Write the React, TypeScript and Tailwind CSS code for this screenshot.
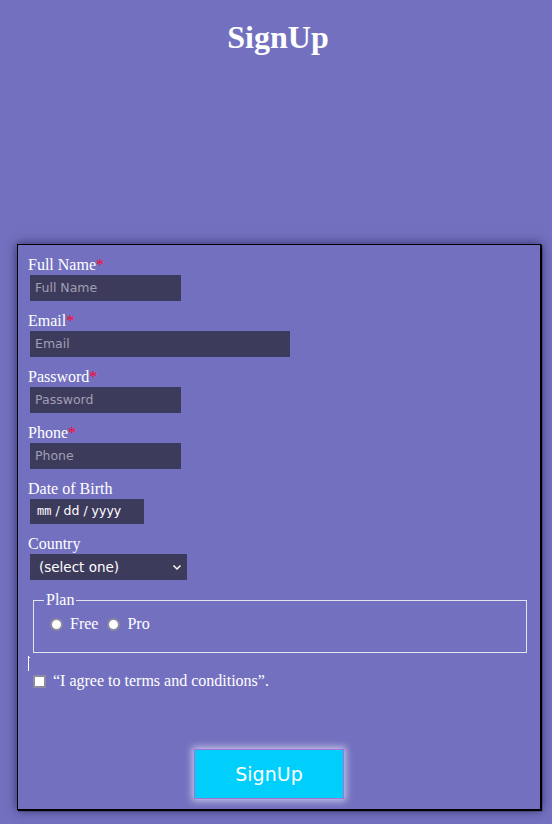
import React from "react";

const serif = "font-['Liberation_Serif','Times_New_Roman',serif]";
const sans = "font-['DejaVu_Sans','Verdana',sans-serif]";

function Field({ label, req, width, placeholder }: { label: string; req?: boolean; width: string; placeholder: string }) {
  return (
    <div className="flex flex-col items-start">
      <div className="h-[19px] leading-[19px] text-[16px] text-white">
        {label}
        {req && <span className="text-[#ff0033]">*</span>}
      </div>
      <div className={`mt-[1px] ml-[2px] h-[26px] ${width} bg-[#3d3b5c] flex items-center px-[5px] text-[12.5px] text-[#a09fb4] ${sans}`}>
        {placeholder}
      </div>
    </div>
  );
}

function Radio() {
  return <span className="inline-block w-[13px] h-[13px] rounded-full bg-white border-[2px] border-[#8c8aa0] box-border" />;
}

export default function App() {
  return (
    <div className={`min-h-[824px] w-[552px] bg-[#7371bf] ${serif} text-white`}>
      <h1 className="pt-[19px] pl-[4px] text-center text-[32px] leading-[37px] font-bold text-white">SignUp</h1>
      <form
        onSubmit={(e) => e.preventDefault()}
        className="mt-[188px] ml-[17px] w-[524px] border border-black pl-[10px] pt-[10px] pb-[10px] shadow-[1px_1px_1px_#000,0_0_10px_rgba(25,20,70,0.75)] flex flex-col"
      >
        <div className="flex flex-col gap-[10px]">
          <Field label="Full Name" req width="w-[151px]" placeholder="Full Name" />
          <Field label="Email" req width="w-[260px]" placeholder="Email" />
          <Field label="Password" req width="w-[151px]" placeholder="Password" />
          <Field label="Phone" req width="w-[151px]" placeholder="Phone" />
          <div className="flex flex-col items-start">
            <div className="h-[19px] leading-[19px] text-[16px]">Date of Birth</div>
            <div className={`mt-[1px] ml-[2px] h-[25px] w-[114px] bg-[#3d3b5c] flex items-center pl-[7px] text-[12.5px] text-white ${sans}`}>
              <span className="font-['Liberation_Mono',monospace] text-[12px]">mm</span>
              <span>&nbsp;/&nbsp;dd&nbsp;/&nbsp;yyyy</span>
            </div>
          </div>
          <div className="flex flex-col items-start">
            <div className="h-[19px] leading-[19px] text-[16px]">Country</div>
            <div className={`mt-[1px] ml-[2px] h-[26px] w-[157px] bg-[#3d3b5c] flex items-center justify-between pl-[9px] pr-[5px] text-[13.5px] text-white ${sans}`}>
              <span>(select one)</span>
              <svg width="10" height="10" viewBox="0 0 10 10" fill="none">
                <path d="M1.5 3.5 L5 7 L8.5 3.5" stroke="white" strokeWidth="1.5" />
              </svg>
            </div>
          </div>
        </div>
        <fieldset className="mt-[11px] ml-[5px] w-[494px] border border-[#e4e4ee] px-[10px] pb-[19px] pt-0">
          <legend className="px-[2px] text-[16px] leading-[18px]">Plan</legend>
          <div className="flex items-center h-[18px] mt-[6px] text-[16px] leading-[18px]">
            <span className="ml-[6px] flex items-center"><Radio /></span>
            <span className="ml-[7px]">Free</span>
            <span className="ml-[9px] flex items-center"><Radio /></span>
            <span className="ml-[7px]">Pro</span>
          </div>
        </fieldset>
        <div className="mt-[3px] h-[15px] w-[3px] relative">
          <span className="absolute left-0 top-0 h-[15px] w-px bg-white" />
          <span className="absolute left-0 top-[1px] h-px w-[2px] bg-white" />
        </div>
        <div className="mt-[1px] flex items-center h-[18px] text-[16px] leading-[18px]">
          <span className="ml-[5px] inline-block w-[13px] h-[13px] bg-white border-[2px] border-[#8c8aa0] box-border" />
          <span className="ml-[7px]">“I agree to terms and conditions”.</span>
        </div>
        <button
          type="submit"
          className={`mt-[59px] ml-[166px] w-[150px] h-[50px] bg-[#00cffc] border border-[#a072e0] text-white text-[19px] ${sans} shadow-[0_0_7px_2px_rgba(255,255,255,0.6)]`}
        >
          SignUp
        </button>
      </form>
    </div>
  );
}
